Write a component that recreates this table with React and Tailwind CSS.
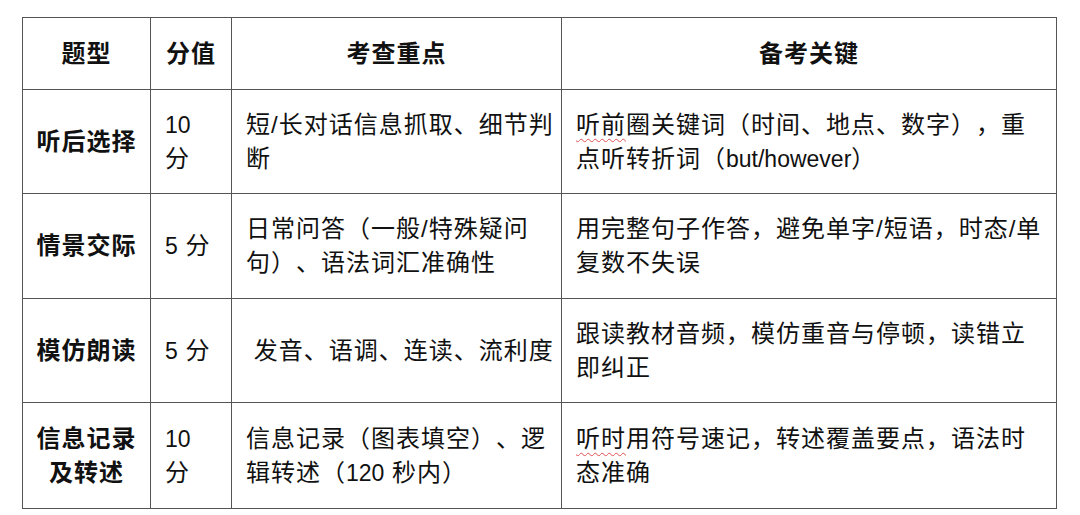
import React from "react";

const Num = ({ children }) => <span className="text-[23px] tracking-normal">{children}</span>;

const Wavy = ({ children }) => (
  <span className="underline decoration-wavy decoration-[#e05050] decoration-1 underline-offset-[5px]">{children}</span>
);

const rows = [
  {
    type: ["听后选择"],
    score: [<Num>10</Num>, "分"],
    focus: ["短/长对话信息抓取、细节判", "断"],
    key: [
      <>
        <Wavy>听前</Wavy>圈关键词（时间、地点、数字），重
      </>,
      <>
        点听转折词（<Num>but/however</Num>）
      </>,
    ],
  },
  {
    type: ["情景交际"],
    score: [<><Num>5</Num> 分</>],
    focus: ["日常问答（一般/特殊疑问", "句）、语法词汇准确性"],
    key: ["用完整句子作答，避免单字/短语，时态/单", "复数不失误"],
  },
  {
    type: ["模仿朗读"],
    score: [<><Num>5</Num> 分</>],
    focus: ["\u00a0发音、语调、连读、流利度"],
    key: ["跟读教材音频，模仿重音与停顿，读错立", "即纠正"],
  },
  {
    type: ["信息记录", "及转述"],
    score: [<Num>10</Num>, "分"],
    focus: [
      "信息记录（图表填空）、逻",
      <>
        辑转述（<Num>120</Num> 秒内）
      </>,
    ],
    key: [
      <>
        <Wavy>听时</Wavy>用符号速记，转述覆盖要点，语法时
      </>,
      "态准确",
    ],
  },
];

const heights = ["h-[104px]", "h-[105px]", "h-[104px]", "h-[106px]"];

const Lines = ({ items }) => (
  <>
    {items.map((l, i) => (
      <div key={i} className="whitespace-nowrap">
        {l}
      </div>
    ))}
  </>
);

export default function App() {
  return (
    <div
      className="w-[1080px] h-[515px] bg-white pt-[17px] pl-[22px] text-[#111]"
      style={{ fontFamily: '"Liberation Sans", "Noto Sans CJK SC", sans-serif' }}
    >
      <table className="border-collapse table-fixed w-[1034px] text-[24px] leading-[34px] tracking-[1px] [text-spacing-trim:space-all]">
        <colgroup>
          <col className="w-[128px]" />
          <col className="w-[81px]" />
          <col className="w-[330px]" />
          <col className="w-[495px]" />
        </colgroup>
        <thead>
          <tr className="h-[72px] font-bold">
            <th className="border border-[#555] text-center">题型</th>
            <th className="border border-[#555] text-center">分值</th>
            <th className="border border-[#555] text-center">考查重点</th>
            <th className="border border-[#555] text-center">备考关键</th>
          </tr>
        </thead>
        <tbody>
          {rows.map((r, i) => (
            <tr key={i} className={heights[i]}>
              <td className="border border-[#555] text-center align-middle font-bold">
                <Lines items={r.type} />
              </td>
              <td className="border border-[#555] align-middle pl-[14px]">
                <Lines items={r.score} />
              </td>
              <td className="border border-[#555] align-middle pl-[14px]">
                <Lines items={r.focus} />
              </td>
              <td className="border border-[#555] align-middle pl-[14px]">
                <Lines items={r.key} />
              </td>
            </tr>
          ))}
        </tbody>
      </table>
    </div>
  );
}
